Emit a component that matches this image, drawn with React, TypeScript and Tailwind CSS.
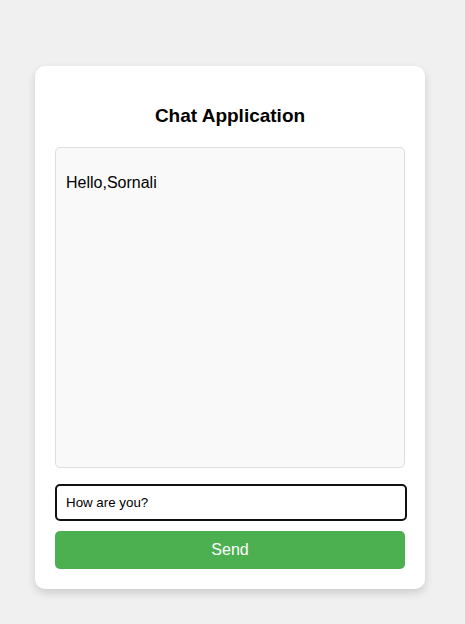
export default function App() {
  return (
    <div className="min-h-screen bg-[#f0f0f0] pt-[66px] font-['Liberation_Sans',Arial,sans-serif]">
      <div className="ml-[35px] w-[390px] rounded-[10px] bg-white px-5 pb-5 pt-[38px] shadow-[0_4px_8px_rgba(0,0,0,0.15)]">
        <h2 className="mb-5 text-center text-[19px] font-bold leading-[23px] text-black">
          Chat Application
        </h2>
        <div className="h-[321px] rounded-[5px] border border-[#ddd] bg-[#f9f9f9] p-2.5">
          <p className="my-4 text-base leading-[18px] text-black">Hello,Sornali</p>
        </div>
        <input
          type="text"
          defaultValue="How are you?"
          className="mt-4 block h-[37px] w-[352px] rounded-[5px] border-2 border-[#111] bg-white px-[9px] text-[13.33px] text-black outline-none"
        />
        <button
          type="button"
          className="mt-2.5 block h-[38px] w-full rounded-[5px] bg-[#4caf50] text-base text-white"
        >
          Send
        </button>
      </div>
    </div>
  );
}
